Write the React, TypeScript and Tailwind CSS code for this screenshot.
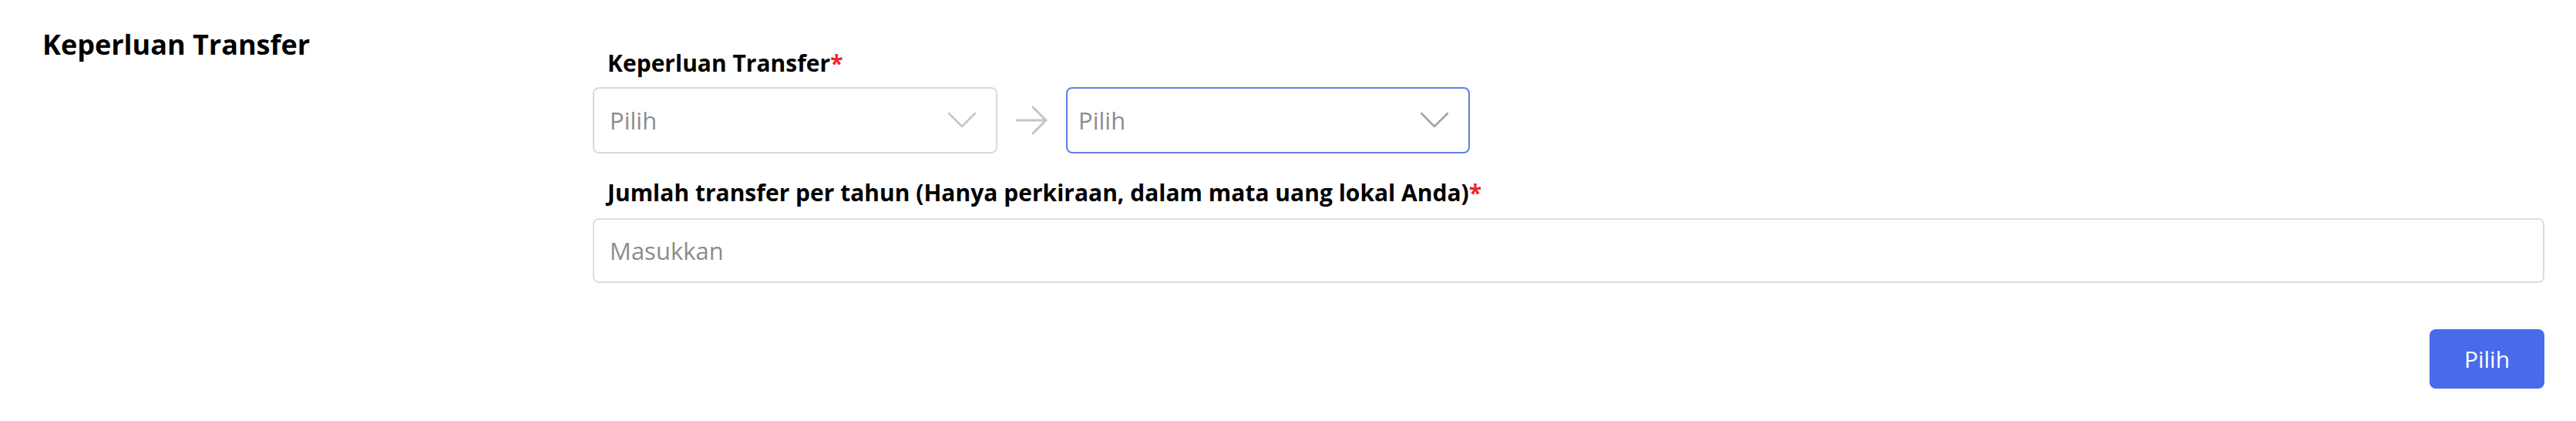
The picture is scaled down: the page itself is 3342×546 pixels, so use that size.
function Chevron({ className }: { className: string }) {
  return (
    <svg width="36" height="20" viewBox="0 0 36 20" fill="none" className={className}>
      <path d="M1 1 L18 18 L35 1" stroke="currentColor" strokeWidth="2.5" strokeLinecap="round" strokeLinejoin="round" />
    </svg>
  )
}

function Arrow() {
  return (
    <svg width="41" height="38" viewBox="0 0 41 38" fill="none" className="text-[#c4c4c4]">
      <path d="M1 19 H39 M22 2 L39 19 L22 36" stroke="currentColor" strokeWidth="3" strokeLinecap="round" strokeLinejoin="round" />
    </svg>
  )
}

function Label({ text, className }: { text: string; className: string }) {
  return (
    <div className={`pl-[19px] text-[30px] leading-[40px] font-bold text-black ${className}`}>
      {text}
      <span className="text-[#f5222d]">*</span>
    </div>
  )
}

export default function App() {
  return (
    <div className="min-h-[546px] w-full bg-white font-['Open_Sans',sans-serif] pt-[34px] pl-[55px] pr-[41px]">
      <div className="flex">
        <div className="w-[714px] shrink-0">
          <h2 className="text-[36px] leading-[48px] font-bold text-black">Keperluan Transfer</h2>
        </div>

        <div className="flex-1 pt-[28px]">
          {/* Keperluan */}
          <Label text="Keperluan Transfer" className="mb-[11px]" />
          <div className="flex items-center">
            <div className="flex h-[86px] w-[525px] items-center justify-between rounded-[8px] border-2 border-[#dadada] bg-white pl-[20px] pr-[26px]">
              <span className="text-[31px] leading-[40px] text-[#8c8c8c]">Pilih</span>
              <Chevron className="text-[#c6c6c6]" />
            </div>
            <div className="flex w-[89px] justify-center">
              <Arrow />
            </div>
            <div className="flex h-[86px] w-[524px] items-center justify-between rounded-[8px] border-2 border-[#5f7fe8] bg-white pl-[14px] pr-[26px]">
              <span className="text-[31px] leading-[40px] text-[#8c8c8c]">Pilih</span>
              <Chevron className="text-[#a3a3a3]" />
            </div>
          </div>

          {/* Jumlah */}
          <div className="mt-[31px]">
            <Label text="Jumlah transfer per tahun (Hanya perkiraan, dalam mata uang lokal Anda)" className="mb-[13px]" />
            <div className="flex h-[84px] items-center rounded-[8px] border-2 border-[#dddddd] bg-white px-[20px]">
              <span className="text-[31px] leading-[40px] text-[#8c8c8c]">Masukkan</span>
            </div>
          </div>

          <div className="mt-[60px] flex justify-end">
            <button className="h-[77px] w-[149px] rounded-[8px] bg-[#486bea] text-[30px] leading-[40px] text-white">
              Pilih
            </button>
          </div>
        </div>
      </div>
    </div>
  )
}
